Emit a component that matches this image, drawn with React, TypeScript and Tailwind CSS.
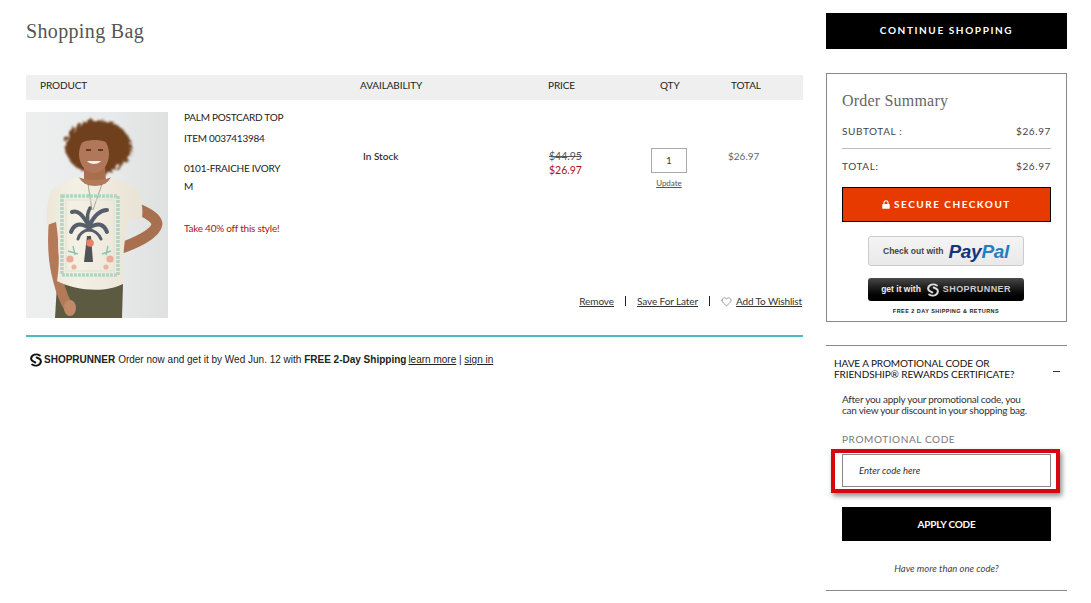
import { Heart } from "lucide-react";

const lato = "font-['Lato',sans-serif]";
const serif = "font-['Liberation_Serif',serif]";
const arial = "font-['Liberation_Sans',sans-serif]";

const SrLogo = ({ size, color }: { size: number; color: string }) => (
  <svg width={size} height={size} viewBox="0 0 20 20" fill="none" stroke={color} strokeWidth="2.8" strokeLinecap="round">
    <path d="M15.5 3.5 C11 0.5 3.5 2 3 8 C3 11.5 6 12.5 9 13.5" />
    <path d="M4.5 16.5 C9 19.5 16.5 18 17 12 C17 8.5 14 7.5 11 6.5" />
  </svg>
);

const Photo = () => (
  <svg width="142" height="206" viewBox="0 0 142 206" className="shrink-0 block">
    <defs>
      <linearGradient id="bg" x1="0" x2="1" y1="0" y2="0">
        <stop offset="0" stopColor="#eeefef" />
        <stop offset="0.6" stopColor="#e8eaeb" />
        <stop offset="1" stopColor="#dfe1e0" />
      </linearGradient>
      <linearGradient id="shirt" x1="0" x2="1" y1="0" y2="0">
        <stop offset="0" stopColor="#ece7d8" />
        <stop offset="0.3" stopColor="#f4f0e4" />
        <stop offset="1" stopColor="#e8e3d4" />
      </linearGradient>
      <filter id="soft" x="-10%" y="-10%" width="120%" height="120%">
        <feGaussianBlur stdDeviation="0.6" />
      </filter>
      <filter id="hair" x="-15%" y="-15%" width="130%" height="130%">
        <feTurbulence baseFrequency="0.16" numOctaves="2" seed="4" />
        <feDisplacementMap in="SourceGraphic" scale="8" />
        <feGaussianBlur stdDeviation="0.8" />
      </filter>
    </defs>
    <rect width="142" height="206" fill="url(#bg)" />
    <g filter="url(#soft)">
      <path d="M29 206 L31 172 L97 172 L96 206 Z" fill="#5b5a40" />
      <path d="M28 108 C26 130 27 150 32 168 C35 180 38 188 43 196" stroke="#b27a58" strokeWidth="10" fill="none" />
      <path d="M106 94 C118 100 130 104 131 112 C130 122 108 132 92 137" stroke="#a9704f" strokeWidth="11" fill="none" strokeLinejoin="round" />
      <ellipse cx="90" cy="138" rx="8" ry="6" fill="#bb8260" />
      <ellipse cx="44" cy="196" rx="6" ry="8" fill="#c08a68" />
      <ellipse cx="70" cy="33" rx="33" ry="27" fill="#70401f" filter="url(#hair)" />
      <path d="M58 52 L58 72 L80 72 L79 52 Z" fill="#a86e4e" />
      <path d="M50 65 C58 76 80 76 88 65 L112 77 C116 88 117 98 116 106 L102 109 C98 130 96 150 97 172 C80 181 50 179 31 169 C34 150 33 130 30 110 L21 113 C20 98 22 86 26 77 Z" fill="url(#shirt)" />
      <path d="M53 65 C58 77 80 77 85 65 C80 69 58 69 53 65 Z" fill="#b17a5a" />
      <path d="M62 72 L66 98 M76 72 L67 98" stroke="#6b5a48" strokeWidth="0.5" />
      <ellipse cx="68" cy="42" rx="15" ry="19" fill="#b0775a" />
      <path d="M50 34 C52 14 84 14 86 34 C78 26 60 26 50 34 Z" fill="#70401f" />
      <path d="M60 38 h5 M72 38 h5" stroke="#3f291d" strokeWidth="1.4" />
      <path d="M61 49 C64 53 72 53 75 49 Z" fill="#f5efe9" />
      <rect x="36" y="84" width="56" height="79" fill="none" stroke="#b3d3c5" strokeWidth="3.5" strokeDasharray="3 1" />
      <rect x="40" y="88" width="48" height="71" fill="none" stroke="#dde6d6" strokeWidth="1.2" />
      <path d="M61 124 L58 150 L67 150 L65 124 Z" fill="#4f5359" />
      <g stroke="#565e69" strokeLinecap="round" fill="none">
        <path d="M63 114 C56 102 52 98 46 100" strokeWidth="4" />
        <path d="M63 114 C60 104 62 100 64 96" strokeWidth="3.5" />
        <path d="M63 114 C68 104 74 98 81 98" strokeWidth="4" />
        <path d="M63 116 C54 110 48 112 45 120" strokeWidth="4" />
        <path d="M63 116 C72 110 78 112 81 120" strokeWidth="4" />
        <path d="M63 118 C58 118 53 122 52 127" strokeWidth="3" />
        <path d="M63 118 C68 118 73 122 75 127" strokeWidth="3" />
      </g>
      <circle cx="64" cy="131" r="3.8" fill="#e97f68" />
      <circle cx="44" cy="147" r="3.6" fill="#ebab96" />
      <circle cx="84" cy="147" r="3.6" fill="#ebab96" />
      <circle cx="48" cy="155" r="2.6" fill="#e7b5a2" />
      <circle cx="80" cy="155" r="2.6" fill="#e7b5a2" />
      <path d="M42 139 l10 3 M47 134 l2 9 M76 142 l9 -3 M82 134 l-2 9" stroke="#8cc3b2" strokeWidth="1.4" />
    </g>
  </svg>
);

export default function App() {
  return (
    <div className={`${lato} flex w-[1091px] h-[603px] overflow-hidden bg-white pl-[26px] pt-[13px] text-[#333]`}>
      <main className="w-[777px] shrink-0">
        <h1 className={`${serif} mt-[5px] h-[57px] text-[20px] leading-[26px] tracking-[0.35px] text-[#555]`}>Shopping Bag</h1>

        <div className="grid grid-cols-[320px_188px_102px_71px_1fr] h-[25px] items-center bg-[#efefef] pb-[6px] pl-[14px] text-[10px] leading-[14px] tracking-[-0.1px] text-[#222]">
          <div>PRODUCT</div>
          <div>AVAILABILITY</div>
          <div>PRICE</div>
          <div className="pl-[10px]">QTY</div>
          <div className="pl-[10px]">TOTAL</div>
        </div>

        <div className="mt-3 flex h-[206px]">
          <Photo />
          <div className="ml-4 flex flex-1 flex-col">
            <div className="flex">
              <div className="w-[179px] text-[10px] leading-[14px] tracking-[-0.25px] text-[#222]">
                <div className="-mt-[2px]">PALM POSTCARD TOP</div>
                <div className="mt-[7px]">ITEM 0037413984</div>
                <div className="mt-[16px]">0101-FRAICHE IVORY</div>
                <div className="mt-[4px]">M</div>
                <div className="mt-[28px] text-[#a8131c]">Take 40% off this style!</div>
              </div>
              <div className="mt-[37px] w-[186px] text-[10px] font-medium leading-[14px] text-[#222]">In Stock</div>
              <div className="mt-[37px] w-[102px] text-[10.5px] leading-[14px]">
                <div className="line-through text-[#555]">$44.95</div>
                <div className="text-[#a8131c]">$26.97</div>
              </div>
              <div className="mt-[36px] w-[77px]">
                <div className="flex h-[25px] w-[36px] items-center justify-center border border-[#aaa] text-[10px] text-[#444]">1</div>
                <div className="mt-[5px] w-[36px] text-center text-[8px] leading-[10px] text-[#555] underline">Update</div>
              </div>
              <div className="mt-[37px] text-[10px] leading-[14px] text-[#666]">$26.97</div>
            </div>
            <div className="mt-auto mb-[10px] mr-px flex items-center justify-end text-[10px] leading-[14px] tracking-[-0.1px] text-[#333]">
              <span className="underline">Remove</span>
              <span className="mx-[11px] h-[10px] w-px bg-[#222]" />
              <span className="underline">Save For Later</span>
              <span className="mx-[11px] h-[10px] w-px bg-[#222]" />
              <Heart size={11} strokeWidth={1} className="mr-[4px]" />
              <span className="underline tracking-[-0.15px]">Add To Wishlist</span>
            </div>
          </div>
        </div>

        <div className="mt-[17px] h-[2px] bg-[#4dbcc2]" />

        <div className={`${arial} mt-[16px] flex items-center pl-[3px] text-[10px] leading-[12px] text-[#222]`}>
          <SrLogo size={14} color="#111" />
          <span className="ml-[1px] font-bold">SHOPRUNNER</span>
          <span className="ml-[3px]">Order now and get it by Wed Jun. 12 with&nbsp;</span>
          <b>FREE 2-Day Shipping</b>
          <span className="ml-[2px] underline">learn more</span>
          <span>&nbsp;|&nbsp;</span>
          <span className="underline">sign in</span>
        </div>
      </main>

      <aside className="ml-[23px] w-[241px] shrink-0">
        <button className="h-[36px] w-full bg-black pb-[2px] text-[10px] font-bold tracking-[1.6px] text-white">CONTINUE SHOPPING</button>

        <section className="mt-[24px] h-[249px] border border-[#888] px-[15px]">
          <h2 className={`${serif} mt-[17px] text-[16px] leading-[20px] tracking-[0.2px] text-[#666]`}>Order Summary</h2>
          <div className="mt-[13px] flex justify-between border-b border-[#bbb] pb-[10px] text-[10px] leading-[14px] tracking-[0.6px] text-[#444]">
            <span>SUBTOTAL :</span>
            <span>$26.97</span>
          </div>
          <div className="mt-[10px] flex justify-between text-[10px] leading-[14px] tracking-[0.6px] text-[#444]">
            <span>TOTAL:</span>
            <span>$26.97</span>
          </div>
          <button className="mt-[14px] flex h-[35px] w-[209px] items-center justify-center gap-[4px] border border-black bg-[#e63a00] text-[10px] font-bold tracking-[1.5px] text-white">
            <svg width="8" height="9" viewBox="0 0 9 10" fill="#fff">
              <path d="M1 4.5h7a.7.7 0 0 1 .7.7v3.9a.7.7 0 0 1-.7.7H1a.7.7 0 0 1-.7-.7V5.2A.7.7 0 0 1 1 4.5z" />
              <path d="M2.2 4.6V3a2.3 2.3 0 0 1 4.6 0v1.6" fill="none" stroke="#fff" strokeWidth="1.2" />
            </svg>
            SECURE CHECKOUT
          </button>
          <div className="mt-[14px] flex flex-col items-center pr-[1px]">
            <div className={`${arial} flex h-[30px] w-[156px] items-center justify-center gap-[5px] rounded-[3px] border border-[#ccc] bg-gradient-to-b from-[#f4f4f4] to-[#e9e9e9]`}>
              <span className="text-[8.5px] font-bold text-[#444]">Check out with</span>
              <span className="text-[19px] font-bold italic leading-none tracking-[-0.3px]">
                <span className="text-[#15337f]">Pay</span><span className="text-[#1f80c4]">Pal</span>
              </span>
            </div>
            <div className={`${arial} mt-[12px] flex h-[23px] w-[156px] items-center justify-center rounded-[3px] bg-gradient-to-b from-[#4a4a4a] via-[#161616] to-[#000] text-[#eee]`}>
              <span className="text-[8.5px] font-bold">get it with</span>
              <span className="ml-[5px]"><SrLogo size={14} color="#ddd" /></span>
              <span className="ml-[3px] text-[9px] font-bold tracking-[0.4px] text-[#ccc]">SHOPRUNNER</span>
            </div>
            <div className={`${arial} mt-[6px] text-[5.5px] font-bold leading-[8px] tracking-[0.45px] text-[#222]`}>FREE 2 DAY SHIPPING &amp; RETURNS</div>
          </div>
        </section>

        <section className="mt-[23px] h-[246px] border-y border-[#888]">
          <div className="mt-[12px] flex items-center justify-between pl-[8px] pr-[7px]">
            <div className="text-[10px] leading-[11px] tracking-[-0.1px] text-[#111]">
              HAVE A PROMOTIONAL CODE OR<br />FRIENDSHIP® REWARDS CERTIFICATE?
            </div>
            <div className="mt-[5px] h-px w-[7px] bg-[#333]" />
          </div>
          <p className="mt-[14px] pl-[16px] text-[10px] leading-[11px] tracking-[-0.25px] text-[#333]">
            After you apply your promotional code, you<br />can view your discount in your shopping bag.
          </p>
          <div className="mt-[17px] pl-[16px] text-[10px] leading-[12px] tracking-[0.6px] text-[#777]">PROMOTIONAL CODE</div>
          <div className="ml-[5px] mr-[7px] mt-[4px] border-4 border-[#d8070f] pb-[2px] pl-[7px] pr-[5px] pt-[1px] shadow-[2px_3px_5px_rgba(0,0,0,0.45)]">
            <div className="flex h-[33px] items-center border border-[#888] pl-[16px] pt-[1px] text-[9.5px] italic text-[#333]">Enter code here</div>
          </div>
          <button className="mx-[16px] mt-[14px] block h-[34px] w-[209px] bg-black text-[10px] font-bold tracking-[-0.2px] text-white">APPLY CODE</button>
          <div className="mt-[22px] text-center text-[9.5px] italic leading-[12px] text-[#444]">Have more than one code?</div>
        </section>
      </aside>
    </div>
  );
}
